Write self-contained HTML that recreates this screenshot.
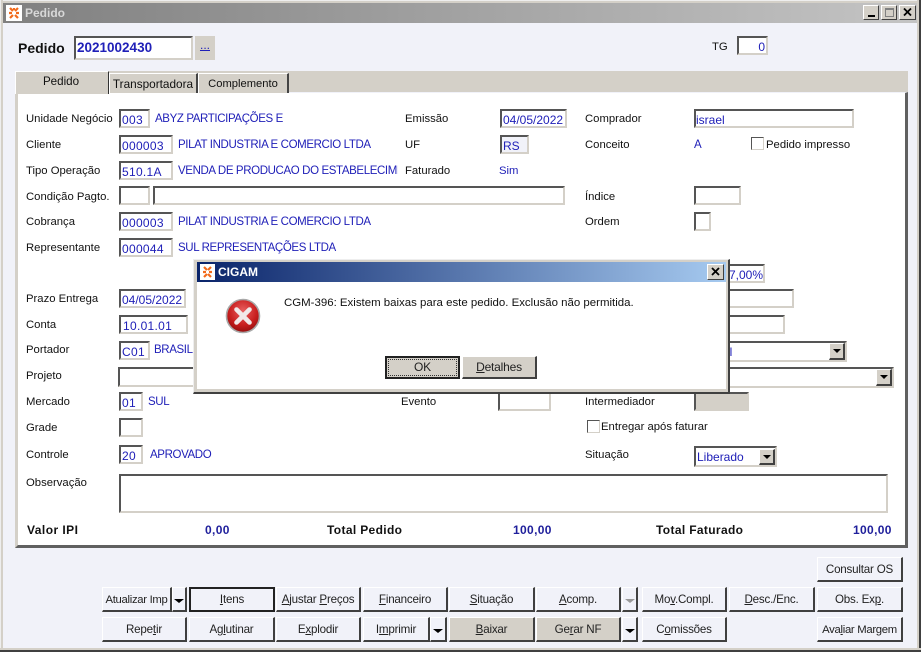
<!DOCTYPE html>
<html><head><meta charset="utf-8"><title>Pedido</title>
<style>
html,body{margin:0;padding:0;background:#f1f2f9}
#w{position:relative;width:921px;height:652px;overflow:hidden;background:#f1f2f9;font:11.3px "Liberation Sans",sans-serif;color:#111}
#w div{position:absolute;box-sizing:border-box}
.l,.v,.b{white-space:nowrap;line-height:18px;height:18px}
.v{color:#2020b8;font-size:11.5px;letter-spacing:-.38px}
.b{font-weight:bold;color:#111;font-size:12px;letter-spacing:.35px;line-height:16px}
.i{background:#fff;border-top:2px solid #555;border-left:2px solid #555;border-right:2px solid #d4d0c8;border-bottom:2px solid #d4d0c8;color:#2020b8;font-size:12px;line-height:18px;padding-left:1px;white-space:nowrap;overflow:hidden}
.n{letter-spacing:.3px}
.btn{background:#f1f2f9;border-top:1px solid #fff;border-left:1px solid #fff;border-right:2px solid #404040;border-bottom:2px solid #404040;text-align:center;line-height:24px;white-space:nowrap;font-size:11.6px;letter-spacing:-.2px;color:#222}
.g{background:#d4d0c8}
.ar:after{content:"";position:absolute;left:50%;top:11px;margin-left:-5px;border-left:5px solid transparent;border-right:5px solid transparent;border-top:4px solid #000}
.dis:after{border-top-color:#999}
.dd{background:#d4d0c8;border-top:1px solid #fff;border-left:1px solid #fff;border-right:2px solid #404040;border-bottom:2px solid #404040}
.dd:after{content:"";position:absolute;left:50%;top:5px;margin-left:-4px;border-left:4px solid transparent;border-right:4px solid transparent;border-top:4px solid #000}
.c{background:#fff;border-top:1px solid #555;border-left:1px solid #555;border-right:1px solid #d4d0c8;border-bottom:1px solid #d4d0c8;width:13px;height:13px}
.tb{background:#d4d0c8;border-top:1px solid #fff;border-left:1px solid #fff;border-right:1px solid #404040;border-bottom:1px solid #404040;width:17px;height:15px}
u{text-decoration:underline}
</style></head><body><div id="w">
<!-- window frame -->
<div style="left:0;top:0;width:921px;height:3px;background:#d4d0c8;border-top:1px solid #eee"></div>
<div style="left:0;top:0;width:3px;height:652px;background:#d4d0c8;border-left:1px solid #eee"></div>
<div style="left:917px;top:0;width:4px;height:652px;background:#d4d0c8;border-right:2px solid #404040"></div>
<div style="left:0;top:648px;width:921px;height:4px;background:#d4d0c8;border-bottom:2px solid #404040"></div>
<!-- title bar -->
<div style="left:3px;top:3px;width:914px;height:20px;background:linear-gradient(90deg,#808080,#c4c4c4)"></div>
<div style="left:6px;top:5px;width:16px;height:16px;background:#fff"><svg width="16" height="16" style="display:block"><path d="M4 3l3 3M12 3L9 6M3 8h3M10 8h3M4 13l3-3M12 13L9 10M8 3v2" stroke="#f26a1b" stroke-width="2.2" fill="none"/></svg></div>
<div style="left:25px;top:5px;font-weight:bold;font-size:12px;line-height:16px;color:#d8d8d8">Pedido</div>
<div class="tb" style="left:863px;top:5px;width:16px;height:15px"><div style="left:4px;top:9px;width:7px;height:2px;background:#000"></div></div>
<div class="tb" style="left:881px;top:5px;width:16px;height:15px"><div style="left:3px;top:2px;width:9px;height:9px;border:1px solid #808080;border-top-width:2px"></div></div>
<div class="tb" style="left:899px;top:5px;width:17px;height:15px"><svg width="15" height="13" style="position:absolute;left:0;top:0"><path d="M4 2.5l7 7M11 2.5l-7 7" stroke="#000" stroke-width="1.8"/></svg></div>
<!-- header -->
<div class="b" style="left:18px;top:40px;font-size:14px;letter-spacing:0">Pedido</div>
<div class="i" style="left:74px;top:36px;width:119px;height:24px;font-weight:bold;font-size:13.5px;line-height:20px;color:#2020b8">2021002430</div>
<div style="left:195px;top:36px;width:20px;height:24px;background:#d4d0c8;color:#2020b8;text-align:center;line-height:19px;text-decoration:underline;font-size:12px">...</div>
<div class="l" style="left:712px;top:38px">TG</div>
<div class="i" style="left:737px;top:36px;width:31px;height:19px;text-align:right;padding-right:1px">0</div>
<!-- tabs -->
<div style="left:15px;top:71px;width:893px;height:22px;background:#d4d0c8"></div>
<div style="left:15px;top:92px;width:893px;height:456px;background:#fff;border-top:1px solid #f1f2f9;border-left:3px solid #d4d0c8;border-right:3px solid #606060;border-bottom:3px solid #606060"></div>
<div style="left:15px;top:71px;width:94px;height:23px;background:#d4d0c8;border-top:1px solid #fff;border-left:1px solid #fff;border-right:1px solid #333;text-align:center;line-height:20px;font-size:11.6px"><span style="position:relative;left:-1px">Pedido</span></div>
<div style="left:109px;top:73px;width:89px;height:20px;background:#d4d0c8;border-top:1px solid #fff;border-left:1px solid #fff;border-right:2px solid #444;text-align:center;line-height:21px;white-space:nowrap;font-size:11.8px">Transportadora</div>
<div style="left:198px;top:73px;width:91px;height:20px;background:#d4d0c8;border-top:1px solid #fff;border-left:1px solid #fff;border-right:2px solid #444;text-align:center;line-height:21px;font-size:11.2px">Complemento</div>
<!-- left column -->
<div class="l" style="left:26px;top:110px">Unidade Negócio</div>
<div class="i n" style="left:119px;top:109px;width:31px;height:19px">003</div>
<div class="v" style="left:155px;top:110px">ABYZ PARTICIPAÇÕES E</div>
<div class="l" style="left:26px;top:136px">Cliente</div>
<div class="i n" style="left:119px;top:135px;width:54px;height:19px">000003</div>
<div class="v" style="left:178px;top:136px">PILAT INDUSTRIA E COMERCIO LTDA</div>
<div class="l" style="left:26px;top:162px">Tipo Operação</div>
<div class="i n" style="left:119px;top:161px;width:54px;height:19px">510.1A</div>
<div class="v" style="left:178px;top:162px;width:220px;overflow:hidden">VENDA DE PRODUCAO DO ESTABELECIMENTO</div>
<div class="l" style="left:26px;top:188px">Condição Pagto.</div>
<div class="i" style="left:119px;top:186px;width:31px;height:19px"></div>
<div class="i" style="left:153px;top:186px;width:412px;height:19px"></div>
<div class="l" style="left:26px;top:213px">Cobrança</div>
<div class="i n" style="left:119px;top:212px;width:54px;height:19px">000003</div>
<div class="v" style="left:178px;top:213px">PILAT INDUSTRIA E COMERCIO LTDA</div>
<div class="l" style="left:26px;top:239px">Representante</div>
<div class="i n" style="left:119px;top:238px;width:54px;height:19px">000044</div>
<div class="v" style="left:178px;top:239px">SUL REPRESENTAÇÕES LTDA</div>
<div class="l" style="left:26px;top:290px">Prazo Entrega</div>
<div class="i" style="left:119px;top:289px;width:67px;height:19px">04/05/2022</div>
<div class="l" style="left:26px;top:316px">Conta</div>
<div class="i n" style="left:119px;top:315px;width:69px;height:19px;padding-left:2px">10.01.01</div>
<div class="l" style="left:26px;top:341px">Portador</div>
<div class="i n" style="left:119px;top:341px;width:31px;height:19px">C01</div>
<div class="v" style="left:154px;top:341px">BRASIL</div>
<div class="l" style="left:26px;top:367px">Projeto</div>
<div class="i" style="left:118px;top:367px;width:90px;height:20px"></div>
<div class="l" style="left:26px;top:393px">Mercado</div>
<div class="i n" style="left:119px;top:392px;width:24px;height:19px">01</div>
<div class="v" style="left:148px;top:393px">SUL</div>
<div class="l" style="left:26px;top:419px">Grade</div>
<div class="i" style="left:119px;top:418px;width:24px;height:19px"></div>
<div class="l" style="left:26px;top:446px">Controle</div>
<div class="i n" style="left:119px;top:445px;width:24px;height:19px">20</div>
<div class="v" style="left:150px;top:446px">APROVADO</div>
<div class="l" style="left:26px;top:474px">Observação</div>
<div class="i" style="left:119px;top:474px;width:769px;height:39px"></div>
<!-- middle/right columns -->
<div class="l" style="left:405px;top:110px">Emissão</div>
<div class="i" style="left:500px;top:109px;width:67px;height:19px">04/05/2022</div>
<div class="l" style="left:405px;top:136px">UF</div>
<div class="i" style="left:500px;top:135px;width:29px;height:19px;background:#f1f2f9">RS</div>
<div class="l" style="left:405px;top:162px">Faturado</div>
<div class="v" style="left:499px;top:162px;font-size:11.3px;letter-spacing:0">Sim</div>
<div class="l" style="left:585px;top:110px">Comprador</div>
<div class="i" style="left:694px;top:109px;width:160px;height:19px;padding-left:0">israel</div>
<div class="l" style="left:585px;top:136px">Conceito</div>
<div class="v" style="left:694px;top:136px">A</div>
<div class="c" style="left:751px;top:137px"></div>
<div class="l" style="left:766px;top:136px">Pedido impresso</div>
<div class="l" style="left:585px;top:188px">Índice</div>
<div class="i" style="left:694px;top:186px;width:47px;height:19px"></div>
<div class="l" style="left:585px;top:213px">Ordem</div>
<div class="i" style="left:694px;top:212px;width:17px;height:19px"></div>
<div class="i" style="left:700px;top:264px;width:65px;height:19px;text-align:right">7,00%</div>
<div class="i" style="left:700px;top:289px;width:94px;height:19px"></div>
<div class="i" style="left:700px;top:315px;width:85px;height:19px"></div>
<div class="i" style="left:700px;top:341px;width:147px;height:21px;padding-left:21px;line-height:19px">al<div class="dd" style="left:127px;top:0;width:16px;height:17px"></div></div>
<div class="i" style="left:700px;top:367px;width:194px;height:21px"><div class="dd" style="left:174px;top:0;width:16px;height:17px"></div></div>
<div class="l" style="left:401px;top:393px">Evento</div>
<div class="i" style="left:498px;top:392px;width:53px;height:19px"></div>
<div class="l" style="left:585px;top:393px">Intermediador</div>
<div class="i" style="left:694px;top:392px;width:55px;height:19px;background:#d4d0c8;border-right-color:#d4d0c8"></div>
<div class="c" style="left:587px;top:420px"></div>
<div class="l" style="left:601px;top:418px">Entregar após faturar</div>
<div class="l" style="left:585px;top:446px">Situação</div>
<div class="i" style="left:694px;top:446px;width:83px;height:21px;line-height:19px">Liberado<div class="dd" style="left:63px;top:1px;width:16px;height:16px"></div></div>
<!-- totals -->
<div class="b" style="left:27px;top:522px;letter-spacing:.45px">Valor IPI</div>
<div class="b" style="left:205px;top:522px;color:#20209c">0,00</div>
<div class="b" style="left:327px;top:522px">Total Pedido</div>
<div class="b" style="left:513px;top:522px;color:#20209c">100,00</div>
<div class="b" style="left:656px;top:522px">Total Faturado</div>
<div class="b" style="left:853px;top:522px;color:#20209c">100,00</div>
<!-- buttons -->
<div class="btn" style="left:817px;top:557px;width:86px;height:25px;line-height:23px">Consultar OS</div>
<div class="btn" style="left:102px;top:587px;width:70px;height:25px;font-size:11.3px;letter-spacing:-.3px">Atualizar Imp</div>
<div class="btn ar" style="left:172px;top:587px;width:15px;height:25px"></div>
<div class="btn" style="left:189px;top:587px;width:86px;height:25px;border:2px solid #222;line-height:22px"><u>I</u>tens</div>
<div class="btn" style="left:276px;top:587px;width:85px;height:25px"><u>A</u>justar <u>P</u>reços</div>
<div class="btn" style="left:363px;top:587px;width:85px;height:25px"><u>F</u>inanceiro</div>
<div class="btn" style="left:449px;top:587px;width:86px;height:25px"><u>S</u>ituação</div>
<div class="btn" style="left:536px;top:587px;width:85px;height:25px"><u>A</u>comp.</div>
<div class="btn ar dis" style="left:622px;top:587px;width:16px;height:25px"></div>
<div class="btn" style="left:642px;top:587px;width:85px;height:25px">Mo<u>v</u>.Compl.</div>
<div class="btn" style="left:729px;top:587px;width:86px;height:25px"><u>D</u>esc./Enc.</div>
<div class="btn" style="left:817px;top:587px;width:86px;height:25px">Obs. Ex<u>p</u>.</div>
<div class="btn" style="left:102px;top:617px;width:85px;height:25px">Repe<u>t</u>ir</div>
<div class="btn" style="left:189px;top:617px;width:86px;height:25px">Ag<u>l</u>utinar</div>
<div class="btn" style="left:276px;top:617px;width:85px;height:25px">E<u>x</u>plodir</div>
<div class="btn" style="left:363px;top:617px;width:67px;height:25px">I<u>m</u>primir</div>
<div class="btn ar" style="left:430px;top:617px;width:17px;height:25px"></div>
<div class="btn g" style="left:449px;top:617px;width:86px;height:25px"><u>B</u>aixar</div>
<div class="btn g" style="left:536px;top:617px;width:85px;height:25px">Ge<u>r</u>ar NF</div>
<div class="btn ar" style="left:622px;top:617px;width:16px;height:25px"></div>
<div class="btn" style="left:642px;top:617px;width:85px;height:25px">C<u>o</u>missões</div>
<div class="btn" style="left:817px;top:617px;width:86px;height:25px;font-size:11.3px;letter-spacing:-.3px">Ava<u>l</u>iar Margem</div>
<!-- dialog -->
<div style="left:193px;top:259px;width:537px;height:135px;background:#d4d0c8;border-top:1px solid #eee;border-left:1px solid #eee;border-right:2px solid #404040;border-bottom:2px solid #404040"></div>
<div style="left:197px;top:262px;width:529px;height:20px;background:linear-gradient(90deg,#0a246a,#a6caf0)"></div>
<div style="left:197px;top:282px;width:529px;height:107px;background:#fff"></div>
<div style="left:200px;top:264px;width:15px;height:16px;background:#fff"><svg width="15" height="16" style="display:block"><path d="M4 3l3 3M11 3L8 6M3 8h3M9 8h3M4 13l3-3M11 13L8 10" stroke="#f26a1b" stroke-width="2.2" fill="none"/></svg></div>
<div style="left:218px;top:264px;font-weight:bold;font-size:12px;line-height:16px;color:#fff">CIGAM</div>
<div class="tb" style="left:707px;top:264px;width:17px;height:16px"><svg width="15" height="14" style="position:absolute;left:0;top:0"><path d="M4 3l7 7M11 3l-7 7" stroke="#000" stroke-width="1.8"/></svg></div>
<div class="l" style="left:284px;top:294px;font-size:11.45px">CGM-396: Existem baixas para este pedido. Exclusão não permitida.</div>
<div style="left:225px;top:298px;width:36px;height:36px"><svg width="36" height="36" style="display:block"><defs><radialGradient id="e" cx=".5" cy=".35" r=".7"><stop offset="0" stop-color="#e86060"/><stop offset=".6" stop-color="#c81e1e"/><stop offset="1" stop-color="#8a0c0c"/></radialGradient></defs><circle cx="18" cy="18" r="16.5" fill="url(#e)" stroke="#a8a8a8" stroke-width="1.6"/><path d="M11.5 11.5l13 13M24.5 11.5l-13 13" stroke="#f1e9e9" stroke-width="4.6" stroke-linecap="round"/></svg></div>
<div class="btn g" style="left:385px;top:356px;width:75px;height:23px;border:2px solid #222;outline:1px dotted #333;outline-offset:-4px;line-height:19px;font-size:12px">OK</div>
<div class="btn g" style="left:462px;top:356px;width:75px;height:23px;line-height:21px;font-size:12px"><u>D</u>etalhes</div>
</div></body></html>
